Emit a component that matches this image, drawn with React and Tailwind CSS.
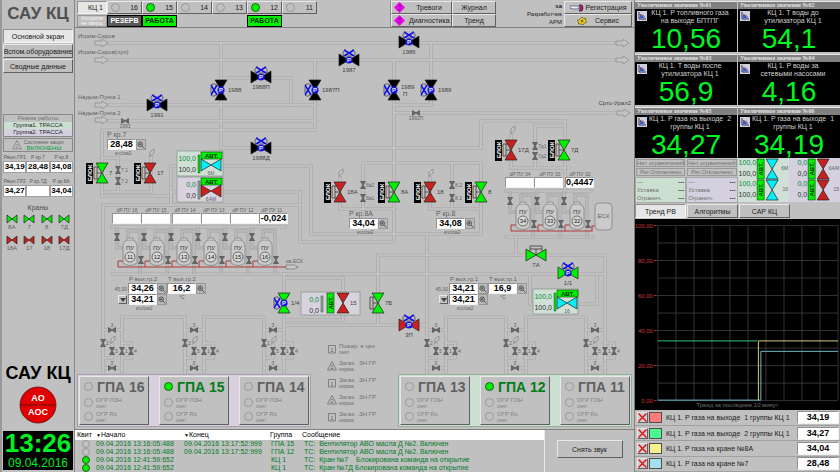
import React, { useState } from 'react';
import clsx from 'clsx';

// The process diagram keeps its own coordinate grid, starting at this origin
const OX = 75;
const OY = 28;

const CAR = '#c92020';
const GREEN = '#00f000';
const CYAN = '#00f0f8';

const UNITS = [
  { id: '16', status: 'РЕЗЕРВ' },
  { id: '15', on: true, status: 'РАБОТА' },
  { id: '14' },
  { id: '13' },
  { id: '12', on: true, status: 'РАБОТА' },
  { id: '11' },
];

const BIG_VALUES = [
  { n: '01', title: ['КЦ 1. P топливного газа', 'на выходе БПТПГ'], value: '10,56' },
  { n: '02', title: ['КЦ 1. T воды до', 'утилизатора КЦ 1'], value: '54,1' },
  { n: '03', title: ['КЦ 1. T воды после', 'утилизатора КЦ 1'], value: '56,9' },
  { n: '04', title: ['КЦ 1. P воды за', 'сетевыми насосами'], value: '4,16' },
  { n: '05', title: ['КЦ 1. P газа на выходе  2', 'группы КЦ 1'], value: '34,27' },
  { n: '06', title: ['КЦ 1. P газа на выходе  1', 'группы КЦ 1'], value: '34,19' },
];

const LEGEND = [
  { color: 'bg-[#ff7c7c]', name: 'КЦ 1. P газа на выходе  1 группы КЦ 1', value: '34,19' },
  { color: 'bg-[#4cf890]', name: 'КЦ 1. P газа на выходе  2 группы КЦ 1', value: '34,27' },
  { color: 'bg-[#f8f08c]', name: 'КЦ 1. P газа на кране №8А', value: '34,04' },
  { color: 'bg-[#a4e0ec]', name: 'КЦ 1. P газа на кране №7', value: '28,48' },
];

const MESSAGES = [
  { start: '09.04.2016 13:16:05:488', end: '09.04.2016 13:17:52:999', group: 'ГПА 15', text: 'ТС:  Вентилятор АВО масла Д №2. Включен' },
  { start: '09.04.2016 13:16:05:488', end: '09.04.2016 13:17:52:999', group: 'ГПА 12', text: 'ТС:  Вентилятор АВО масла Д №2. Включен' },
  { ack: true, start: '09.04.2016 12:41:59:652', end: '', group: 'КЦ 1', text: 'ТС:  Кран №7    Блокирована команда на открытие' },
  { ack: true, start: '09.04.2016 12:41:59:652', end: '', group: 'КЦ 1', text: 'ТС:  Кран №7Д Блокирована команда на открытие' },
];

const RAISED = 'border border-t-[#e8e8e8] border-l-[#e8e8e8] border-b-[#606060] border-r-[#606060]';
const PRESSED = 'border border-t-[#909090] border-l-[#909090] border-b-[#f4f4f4] border-r-[#f4f4f4]';

const Lamp = ({ on, className }) => (
  <span
    className={clsx(
      'inline-block shrink-0 rounded-full border',
      on ? 'bg-[#00f000] border-[#206020]' : 'border-[#989898]',
      className
    )}
  />
);

const MenuButton = ({ active, className, children, ...rest }) => (
  <button
    type="button"
    className={clsx(
      'flex items-center justify-center whitespace-nowrap text-[7px] leading-none text-[#202020]',
      active ? `bg-[#e6e6e6] ${PRESSED}` : `bg-[#c0c0c0] ${RAISED}`,
      className
    )}
    {...rest}
  >
    {children}
  </button>
);

/* ---------- valves ---------- */

const Bowtie = ({ x, y, fill, vertical, w = 10, h = 6, stroke = '#202020' }) => (
  <path
    d={
      vertical
        ? `M${x - h} ${y - w}H${x + h}L${x} ${y}L${x + h} ${y + w}H${x - h}L${x} ${y}Z`
        : `M${x - w} ${y - h}V${y + h}L${x} ${y}L${x + w} ${y + h}V${y - h}L${x} ${y}Z`
    }
    fill={fill}
    stroke={stroke}
    strokeWidth="0.7"
  />
);

const RemoteMark = ({ x, y, vertical }) => {
  const cx = vertical ? x - 7 : x;
  const cy = vertical ? y : y - 7;
  return (
    <g>
      <g transform={`translate(${cx} ${cy}) rotate(${vertical ? 90 : 0})`} fill="none">
        <path d="M-5 3C-7 1 -6 -3 -3 -3M5 3C7 1 6 -3 3 -3M-3 3H3" stroke="#303030" strokeWidth="0.7" />
        <path d="M-5 -3L5 3M5 -3L-5 3" stroke="#1010e8" strokeWidth="1.5" />
      </g>
      <circle cx={x} cy={y} r="3.6" fill="#1414e0" />
      <text x={x} y={y + 2} fontSize="6" fontWeight="700" fill="#e0e8ff" textAnchor="middle">P</text>
    </g>
  );
};

const Bracket = ({ x, y, vertical }) => (
  <path
    d={vertical ? `M${x - 3} ${y - 6}H${x - 8}V${y + 6}H${x - 3}M${x - 5} ${y - 6}V${y + 6}M${x - 5} ${y}H${x}` : `M${x - 6} ${y - 4}V${y - 9}H${x + 6}V${y - 4}M${x - 6} ${y - 6}H${x + 6}M${x} ${y - 6}V${y}`}
    fill="none"
    stroke="#484848"
    strokeWidth="0.9"
  />
);

const Label = ({ x, y, size = 6, anchor = 'start', fill = '#606060', bold, children }) => (
  <text x={x} y={y} fontSize={size} textAnchor={anchor} fill={fill} fontWeight={bold ? 700 : 400}>
    {children}
  </text>
);

const Valve = ({ x, y, fill = '#000', vertical, remote, bracket, blocked, label, label2 }) => (
  <g>
    {(bracket || blocked) && <Bracket x={x} y={y} vertical={vertical} />}
    <Bowtie x={x} y={y} fill={fill} vertical={vertical} />
    {remote && <RemoteMark x={x} y={y} vertical={vertical} />}
    {blocked && (
      <g>
        <rect x={x - 16} y={y - 10} width="7" height="21" fill="#000" />
        <text
          transform={`translate(${x - 10} ${y}) rotate(-90)`}
          fontSize="6"
          fontWeight="700"
          fill="#fff"
          textAnchor="middle"
        >
          БЛОК
        </text>
      </g>
    )}
    {label && (
      <Label
        x={vertical ? x + 7 : x}
        y={vertical ? (label2 ? y - 1 : y + 2) : y + 12}
        anchor={vertical ? 'start' : 'middle'}
        fill="#404040"
      >
        {label}
      </Label>
    )}
    {label2 && <Label x={x + 9} y={y + 6} fill="#404040">{label2}</Label>}
  </g>
);

const MiniValve = ({ x, y, vertical, label }) => (
  <g>
    <Bowtie x={x} y={y} vertical={vertical} w={3.5} h={2.5} fill="#686868" stroke="#505050" />
    {label && (
      <Label x={vertical ? x + 3 : x} y={vertical ? y + 2 : y - 3} size={5} anchor={vertical ? 'start' : 'middle'}>
        {label}
      </Label>
    )}
  </g>
);

const Flag = ({ x, y }) => (
  <path d={`M${x} ${y + 5}V${y}L${x + 4} ${y - 3}V${y + 1}L${x} ${y + 4}`} fill="#c8c8c8" stroke="#808080" strokeWidth="0.7" />
);

const FlowArrow = ({ x, y }) => (
  <path d={`M${x} ${y - 2}H${x + 7}V${y - 4}L${x + 13} ${y}L${x + 7} ${y + 4}V${y + 2}H${x}Z`} fill="#c4c4c4" stroke="#909090" strokeWidth="0.8" />
);

/* ---------- pipes ---------- */

const PIPES = [
  'M108 43H614',
  'M108 60H614',
  'M108 105H315',
  'M108 121H315',
  'M315 60V130H102V196H171',
  'M221 43V148H481V121H565V191',
  'M221 78H291V105',
  'M394 60V242H300V192H171V205',
  'M431 43V105H394',
  'M394 113H615',
  'M102 158H118V192M102 192H151V156',
  'M171 205V166H311V234H481V163H363V209',
  'M300 205H103V375',
  'M340 178V209H394',
  'M430 178V209H481M452 163V209',
  'M511 135V168H565M535 168V126H565',
  'M506 191H591M506 237H592M516 237V255',
  'M112 227H285',
  'M113 274H605',
  'M284 274V375M284 278H343V320H284',
  'M378 325V255H605V375',
  'M284 325H427M427 234V375',
  'M530 274V304H597V274',
  'M122 375V317H185V375M204 375V317H264V375',
  'M446 375V317H506V375M526 375V317H586V375',
];

const TURBINE_X = [103, 185, 264, 427, 506, 586];
TURBINE_X.forEach((x) => {
  PIPES.push(`M${x} 330H${x + 19}M${x} 368H${x + 19}M${x + 19} 343H${x + 28}V358H${x + 19}M${x + 9} 343V358H${x}`);
});

const VESSELS = [
  ...[11, 12, 13, 14, 15, 16].map((n, i) => ({ n, x: 130 + i * 27, y: 257 })),
  ...[34, 33, 32].map((n, i) => ({ n, x: 523 + i * 27, y: 221 })),
];

const Pipes = () => (
  <g fill="none" strokeLinejoin="miter" strokeLinecap="square">
    {PIPES.map((d) => <path key={d} d={d} stroke="#a6a6a6" strokeWidth="3.2" />)}
    {PIPES.map((d) => <path key={d} d={d} stroke="#c8c8c8" strokeWidth="1.6" />)}
  </g>
);

const Vessel = ({ x, y, n }) => (
  <g>
    <path d={`M${x - 13} ${y - 30}V${y - 9}H${x - 7}M${x - 2} ${y - 19}V${y - 26}H${x + 10}V${y + 17}`} fill="none" stroke="#a0a0a0" strokeWidth="3" />
    <path d={`M${x - 13} ${y - 30}V${y - 9}H${x - 7}M${x - 2} ${y - 19}V${y - 26}H${x + 10}V${y + 17}`} fill="none" stroke="#c9c9c9" strokeWidth="1.2" />
    <path d={`M${x - 12} ${y + 10}V${y + 4}H${x - 7}`} fill="none" stroke="#b03838" />
    <path
      d={`M${x - 7} ${y + 6}V${y - 12}Q${x - 6} ${y - 16} ${x - 3} ${y - 17}H${x + 3}Q${x + 6} ${y - 16} ${x + 7} ${y - 12}V${y + 6}Q${x} ${y + 11} ${x - 7} ${y + 6}Z`}
      fill="#cacaca"
      stroke="#808080"
      strokeWidth="0.8"
    />
    <path d={`M${x - 3} ${y - 17}V${y - 19}H${x + 3}V${y - 17}`} fill="#c4c4c4" stroke="#888" strokeWidth="0.7" />
    <Label x={x} y={y - 7} anchor="middle" fill="#404040">ПУ</Label>
    <circle cx={x} cy={y} r="5" fill="#d8d8d8" stroke="#404040" strokeWidth="0.7" />
    <Label x={x} y={y + 2} anchor="middle" fill="#202020">{n}</Label>
    <MiniValve x={x - 13} y={y - 20} vertical />
    <MiniValve x={x + 11} y={y + 3} vertical />
  </g>
);

const TurbineValves = ({ x }) => (
  <g>
    <MiniValve x={x + 9} y={330} label="3" />
    <MiniValve x={x} y={343} vertical label="2" />
    <Flag x={x + 8} y={339} />
    <MiniValve x={x + 9} y={351} vertical label="5" />
    <MiniValve x={x + 19} y={351} vertical label="1" />
    <MiniValve x={x + 28} y={351} vertical label="4" />
    <MiniValve x={x + 9} y={368} label="3'" />
  </g>
);

const Regulator = ({ x, y, width, height, tone, top, bottom, barOn, valueX, barX }) => (
  <g>
    <rect x={x} y={y} width={width} height={height} fill={tone} stroke="#8c9890" strokeWidth="0.8" />
    <Label x={valueX} y={y + 10} size={7} anchor="end" fill="#008c3c">{top}</Label>
    <Label x={valueX} y={y + 21} size={7} anchor="end" fill="#303030">{bottom}</Label>
    <rect x={barX} y={y + 4} width="2" height={height - 7} fill={barOn ? '#00e000' : '#a0a0a0'} stroke="#385038" strokeWidth="0.5" />
  </g>
);

const AutoTag = ({ x, y }) => (
  <g>
    <rect x={x} y={y} width="21" height="7" fill="#00f000" stroke="#104010" strokeWidth="0.6" />
    <Label x={x + 10.5} y={y + 6} anchor="middle" fill="#002800" bold>АВТ.</Label>
  </g>
);

const AutoTagVertical = ({ x, y }) => (
  <g>
    <rect x={x} y={y} width="7" height="20" fill="#00f000" stroke="#104010" strokeWidth="0.6" />
    <text transform={`translate(${x + 6} ${y + 10}) rotate(-90)`} fontSize="6" fontWeight="700" fill="#002800" textAnchor="middle">
      АВТ.
    </text>
  </g>
);

const Drawing = () => (
  <svg viewBox={`${OX} ${OY} 560 347`} width="560" height="347" className="block" fontFamily="Liberation Sans, sans-serif">
    <Pipes />
    <FlowArrow x={95} y={43} />
    <FlowArrow x={95} y={60} />
    <FlowArrow x={95} y={105} />
    <FlowArrow x={95} y={120} />
    <FlowArrow x={616} y={43} />
    <FlowArrow x={616} y={60} />
    <FlowArrow x={617} y={113} />
    <Label x={78} y={38}>Игрим-Серов</Label>
    <Label x={78} y={54}>Игрим-Серов(луп)</Label>
    <Label x={78} y={99}>Надым-Пунга 1</Label>
    <Label x={78} y={115}>Надым-Пунга 2</Label>
    <Label x={631} y={105} anchor="end" fill="#404040">Срто-Урал2</Label>

    <MiniValve x={125} y={121} />
    <Label x={125} y={128} size={5} anchor="middle">1993</Label>
    <MiniValve x={416} y={113} />
    <Label x={416} y={120} size={5} anchor="middle">1992П</Label>

    <Valve x={409} y={42} remote label="1986" />
    <Valve x={349} y={60} remote label="1987" />
    <Valve x={261} y={77} remote label="1988П" />
    <Valve x={157} y={105} remote label="1991" />
    <Valve x={261} y={148} remote label="1988Д" />
    <Valve x={221} y={90} vertical remote label="1988" />
    <Valve x={315} y={90} vertical remote label="1987П" />
    <Valve x={394} y={90} vertical remote label="1989" label2="П" />
    <Valve x={431} y={90} vertical remote label="1989" />

    <Flag x={150} y={152} />
    <Flag x={339} y={172} />
    <Flag x={429} y={172} />
    <Flag x={511} y={129} />
    <Valve x={102} y={173} vertical blocked fill={GREEN} label="7" />
    <Valve x={150} y={173} vertical blocked fill={CAR} label="17" />
    <Valve x={340} y={192} vertical blocked fill={CAR} label="18А" />
    <Valve x={394} y={192} vertical blocked fill={GREEN} label="8А" />
    <Valve x={430} y={192} vertical blocked fill={CAR} label="18" />
    <Valve x={481} y={192} vertical blocked fill={GREEN} label="8" />
    <Valve x={511} y={150} vertical blocked fill={CAR} label="17Д" />
    <Valve x={564} y={150} vertical blocked fill={GREEN} label="7Д" />
    <MiniValve x={118} y={170} vertical label="7.1" />
    <MiniValve x={118} y={181} vertical label="7.2" />
    <MiniValve x={363} y={185} vertical label="8а2" />
    <MiniValve x={363} y={198} vertical label="8а1" />
    <MiniValve x={452} y={185} vertical label="8.2" />
    <MiniValve x={452} y={198} vertical label="8.1" />
    <MiniValve x={535} y={146} vertical label="7д1" />
    <MiniValve x={535} y={156} vertical label="7д2" />

    <Regulator x={177} y={151} width={46} height={25} tone="#d0e0d6" top="100,0" bottom="100,0" barOn valueX={196} barX={198} />
    <AutoTag x={201} y={152} />
    <Bowtie x={211} y={165} fill={CYAN} />
    <Label x={211} y={175} size={5} anchor="middle">6М</Label>
    <Regulator x={177} y={177} width={46} height={25} tone="#d8d2de" top="0,0" bottom="0,0" valueX={196} barX={198} />
    <AutoTag x={201} y={178} />
    <Bowtie x={211} y={191} fill={CAR} />
    <Label x={211} y={201} size={5} anchor="middle">6АМ</Label>

    {['16', '15', '14', '13', '12', '11'].map((n, i) => (
      <Label key={n} x={127 + i * 29} y={212} size={5} anchor="middle">dP ПУ {n}</Label>
    ))}
    {['34', '33', '32'].map((n, i) => (
      <Label key={n} x={520 + i * 30} y={176} size={5} anchor="middle">dP ПУ {n}</Label>
    ))}

    {VESSELS.map((v) => <Vessel key={v.n} {...v} />)}
    <path d="M118 267H286M511 231H592V226H595" fill="none" stroke="#b03838" strokeWidth="1.2" />
    <path d="M286 265H294L298 267L294 269H286Z" fill="#c8c8c8" stroke="#707070" strokeWidth="0.7" />
    <Label x={286} y={263} size={5}>на ЕСК</Label>
    <rect x={595} y={203} width="17" height="27" rx="4" fill="#cacaca" stroke="#909090" />
    <Label x={603.5} y={218} anchor="middle">ЕСК</Label>

    <Valve x={284} y={303} vertical remote fill={GREEN} label="1/4" />
    <Regulator x={301} y={292} width={59} height={23} tone="#d8d2de" top="0,0" bottom="0,0" valueX={319} barX={321} />
    <AutoTagVertical x={327} y={293} />
    <Valve x={343} y={303} vertical fill={CAR} label="15" />
    <Valve x={378} y={303} vertical bracket fill={GREEN} label="7Б" />
    <Valve x={409} y={325} remote fill={CAR} label="3П" />
    <Valve x={536} y={255} bracket fill={GREEN} label="7А" />
    <Valve x={568} y={273} remote fill={GREEN} label="1/1" />
    <Regulator x={533} y={289} width={45} height={25} tone="#d0e0d6" top="100,0" bottom="100,0" barOn valueX={552} barX={554} />
    <AutoTag x={557} y={290} />
    <Bowtie x={567} y={303} fill={CYAN} />
    <Label x={567} y={313} size={5} anchor="middle">16</Label>

    {TURBINE_X.map((x) => <TurbineValves key={x} x={x} />)}
  </svg>
);

/* ---------- html pieces that sit on the diagram ---------- */

const Place = ({ x, y, className, children }) => (
  <div className={clsx('absolute whitespace-nowrap', className)} style={{ left: x - OX, top: y - OY }}>
    {children}
  </div>
);

const ValueBox = ({ children }) => (
  <output className={`block h-[11px] w-[29px] bg-white text-center text-[9px] font-bold leading-[9px] text-black ${PRESSED}`}>
    {children}
  </output>
);

const ZoomButton = ({ label }) => (
  <button type="button" aria-label={label} className="flex h-[11px] w-[10px] items-center justify-center border border-[#989898] bg-[#b8b8b8]">
    <svg viewBox="0 0 8 8" className="h-2 w-2" fill="none" stroke="#404040" strokeWidth="0.8">
      <circle cx="3.2" cy="3.2" r="2.3" />
      <path d="M5 5L7.5 7.5M2 3.2H4.4M3.2 2V4.4" />
    </svg>
  </button>
);

const Readout = ({ value, label }) => (
  <div className="flex">
    <ValueBox>{value}</ValueBox>
    <ZoomButton label={label} />
  </div>
);

const SmallReadout = ({ x, y, title, value }) => (
  <Place x={x} y={y} className="text-[7px] leading-[8px] text-[#606060]">
    <div>{title}</div>
    <Readout value={value} label={title} />
    <div className="ml-2 text-[5px] leading-[6px]">кгс/см2</div>
  </Place>
);

const OutletBlock = ({ x, group, p, setpoint, t }) => (
  <Place x={x} y={275} className="flex items-start text-[6px] leading-[8px] text-[#606060]">
    <div className="flex w-[15px] flex-col items-end pt-[10px] pr-px text-[5px]">
      <span>45,00</span>
      <button type="button" aria-label={`Уставка гр.${group}`} className={`mt-[2px] flex h-[9px] w-[9px] items-center justify-center bg-[#c0c0c0] ${RAISED}`}>
        <svg viewBox="0 0 6 4" className="h-1 w-1.5"><path d="M0 0H6L3 4Z" fill="#404040" /></svg>
      </button>
    </div>
    <div>
      <div className="pl-px">P вых.гр.{group}</div>
      <Readout value={p} label="P вых." />
      <Readout value={setpoint} label="Уставка" />
      <div className="ml-2 text-[5px] leading-[6px]">кгс/см2</div>
    </div>
    <div>
      <div className="pl-px">T вых.гр.{group}</div>
      <Readout value={t} label="T вых." />
      <div className="ml-3 text-[5px] leading-[6px]">°C</div>
    </div>
  </Place>
);

const ALARMS = [
  { kind: '1', name: 'Пожар  в цех', state: 'снят' },
  { kind: '2', name: 'Загаз.  ЗН ГР', state: 'норма' },
  { kind: '1', name: 'Загаз.  ЗН ГР', state: 'норма' },
  { kind: '2', name: 'Загаз.  ЗН ГР', state: 'норма' },
  { kind: '1', name: 'Загаз.  ЗН ГР', state: 'норма' },
];

const Turbine = ({ id }) => {
  const on = UNITS.find((u) => u.id === id).on;
  return (
    <button type="button" className={`h-[49px] min-w-0 flex-1 bg-[#c0c0c0] pl-[4px] text-left text-[6px] text-[#808080] ${RAISED}`}>
      <span className="flex h-[18px] items-center gap-[4px]">
        <Lamp on={on} className="h-[9px] w-[9px]" />
        <span className={clsx('whitespace-nowrap text-[14px] font-bold leading-none', on ? 'text-[#007c18]' : 'text-[#606060]')}>
          ГПА {id}
        </span>
      </span>
      {['ОГР ПЗН', 'ОГР Rc'].map((name) => (
        <span key={name} className="flex h-[14px] items-center gap-[3px]">
          <Lamp className="h-[9px] w-[9px]" />
          <span className="leading-[6px]">
            <span className="block">{name}</span>
            <span className="block text-[5px]">снят</span>
          </span>
        </span>
      ))}
    </button>
  );
};

const Mimic = () => (
  <section className="relative">
    <Drawing />
    <SmallReadout x={107} y={131} title="P кр.7" value="28,48" />
    <SmallReadout x={349} y={210} title="P кр.8А" value="34,04" />
    <SmallReadout x={436} y={210} title="P кр.8" value="34,08" />
    <OutletBlock x={113} group="2" p="34,26" setpoint="34,21" t="16,2" />
    <OutletBlock x={434} group="1" p="34,21" setpoint="34,21" t="16,9" />
    <Place x={112} y={213} className="flex gap-[2px]">
      <div className="flex"><ValueBox /><ValueBox /></div>
      <div className="flex"><ValueBox /><ValueBox /><ValueBox /><ValueBox>-0,024</ValueBox></div>
    </Place>
    <Place x={505} y={177} className="flex gap-[2px]">
      <div className="flex"><ValueBox /><ValueBox /></div>
      <ValueBox>0,4447</ValueBox>
    </Place>
    <Place x={327} y={340} className="flex flex-col">
      {ALARMS.map((a, i) => (
        <div key={i} className="flex h-[17px] items-center gap-[2px] text-[#707070]">
          <svg viewBox="0 0 10 10" className="h-[10px] w-[10px]" fill="none" stroke="#707070" strokeWidth="0.8">
            {a.kind === '1' ? <path d="M1.5 1.5H8.5V9H1.5Z" /> : <path d="M5 0.5L9.5 9H0.5Z" />}
            <text x="5" y="8" fontSize="6" textAnchor="middle" fill="#606060" stroke="none">{a.kind}</text>
          </svg>
          <div className="leading-[6px]">
            <div className="whitespace-pre text-[6px]">{a.name}</div>
            <div className="text-[5px]">{a.state}</div>
          </div>
        </div>
      ))}
    </Place>
    <div className="-mt-px flex justify-between pr-[2px] pl-[2px]">
      <div className="flex w-[234px] gap-[10px] border border-[#a8a0ac] bg-[#d8d0dc] p-[1px]">
        {['16', '15', '14'].map((id) => <Turbine key={id} id={id} />)}
      </div>
      <div className="flex w-[234px] gap-[10px] border border-[#98aca0] bg-[#cce0d2] p-[1px]">
        {['13', '12', '11'].map((id) => <Turbine key={id} id={id} />)}
      </div>
    </div>
  </section>
);

/* ---------- left column ---------- */

const SideValves = ({ fill, names }) => (
  <div className="grid grid-cols-4 text-center text-[6px] leading-[7px] text-[#606060]">
    {names.map((n) => (
      <div key={n}>
        <svg viewBox="0 0 14 10" className="mx-auto block h-[10px] w-[14px]">
          <Bowtie x={7} y={5} w={5} h={4} fill={fill} />
        </svg>
        {n}
      </div>
    ))}
  </div>
);

const SideReadings = ({ items }) => (
  <div className="grid grid-cols-3 text-center">
    {items.map(([name, value]) => (
      <div key={name} className="min-w-0">
        <div className="whitespace-nowrap text-[5px] leading-[7px] text-[#585858]">{name}</div>
        <output className="block h-[12px] border border-[#a0a0a0] bg-white text-[8px] font-bold leading-[10px] text-black">{value}</output>
      </div>
    ))}
  </div>
);

const LeftPanel = () => {
  const [screen, setScreen] = useState('Основной экран');
  return (
    <aside className="flex w-[75px] shrink-0 flex-col border-r border-l-2 border-[#888888] border-l-[#989898] px-px">
      <h1 className="pt-[4px] text-center text-[17px] font-bold leading-[20px] text-[#505050]">САУ КЦ</h1>
      <nav className="mt-[5px] flex flex-col gap-px">
        {['Основной экран', 'Вспом.оборудование', 'Сводные данные'].map((s) => (
          <MenuButton key={s} active={screen === s} onClick={() => setScreen(s)} className="h-[14px] w-full">
            {s}
          </MenuButton>
        ))}
      </nav>
      <div className="mt-[41px] border border-[#888888] text-center text-[6px] leading-[7px] text-[#202020]">
        <div className="text-[#707070]">Режим работы</div>
        <div className="bg-[#cce0d2]">Группа1. ТРАССА</div>
        <div className="bg-[#d4d0e0]">Группа2. ТРАССА</div>
      </div>
      <div className="mt-px flex items-center justify-center gap-[2px] border border-[#888888] text-[6px] leading-[6px]">
        <svg viewBox="0 0 10 10" className="h-[10px] w-[10px]" fill="none" stroke="#888" strokeWidth="0.9">
          <path d="M5 0.5L9.5 9H0.5Z" />
          <text x="5" y="8" fontSize="6" textAnchor="middle" fill="#808080" stroke="none">2</text>
        </svg>
        <div className="text-center">
          <div className="whitespace-nowrap text-[5px] text-[#606060]">Состояние защит</div>
          <div className="text-[#00a040]">ВКЛЮЧЕНЫ</div>
        </div>
      </div>
      <div className="mt-[2px] flex flex-col gap-[5px]">
        <SideReadings items={[['Pвых.ГР1', '34,19'], ['P кр.7', '28,48'], ['P кр.8', '34,08']]} />
        <SideReadings items={[['Pвых.ГР2', '34,27'], ['P кр.7Д', ''], ['P кр.8А', '34,04']]} />
      </div>
      <div className="mt-[5px] text-center text-[7px] leading-[12px] text-[#505050]">Краны</div>
      <div className="flex flex-col gap-[4px]">
        <SideValves fill={GREEN} names={['8А', '7', '8', '7Д']} />
        <SideValves fill={CAR} names={['18А', '17', '18', '17Д']} />
      </div>
      <div className="mt-auto text-center text-[18px] font-bold leading-[20px] text-black">САУ КЦ</div>
      <svg viewBox="0 0 38 38" className="mx-auto mt-[3px] mb-[7px] block h-[38px] w-[38px]" fontFamily="Liberation Sans, sans-serif">
        <circle cx="19" cy="19" r="18" fill="#e00000" stroke="#601010" strokeWidth="0.8" />
        <path d="M1 19H37" stroke="#501010" strokeWidth="0.8" />
        <text x="19" y="15" fontSize="9" fontWeight="700" fill="#fff" textAnchor="middle">АО</text>
        <text x="19" y="29" fontSize="9" fontWeight="700" fill="#fff" textAnchor="middle">АОС</text>
      </svg>
      <div className="mb-[2px] bg-black text-center text-[#00f020]">
        <div className="text-[26px] font-bold leading-[25px]">13:26</div>
        <div className="text-[12px] leading-[14px]">09.04.2016</div>
      </div>
    </aside>
  );
};

/* ---------- top bar ---------- */

const AlarmIcon = () => (
  <svg viewBox="0 0 12 12" className="mr-1 h-[11px] w-[11px] shrink-0">
    <path d="M6 0L12 6L6 12L0 6Z" fill="#f000f0" />
    <path d="M4.500 3.500H7.500L6 5.500C8.500 6 7.500 9 4.500 8.500" fill="none" stroke="#600060" strokeWidth="0.8" />
  </svg>
);

const TopBar = () => (
  <header className="flex h-[28px] border-b border-[#808080] pt-[1px] pl-[2px]">
    <div className="w-[30px]">
      <MenuButton active className="h-[13px] w-full justify-end! pr-[3px]">КЦ 1</MenuButton>
      <div className="mt-px h-[12px] border border-[#989898] text-center text-[5px] leading-[5px] text-[#f8f8f8]">
        Алгоритм<br />не запущ
      </div>
    </div>
    {UNITS.map((u) => (
      <div key={u.id} className="w-[35px]">
        <MenuButton className="h-[13px] w-full justify-between! px-[3px]">
          <Lamp on={u.on} className="h-[9px] w-[9px]" />
          {u.id}
        </MenuButton>
        {u.status && (
          <div
            className={clsx(
              'mt-px h-[12px] border border-black text-center text-[7px] font-bold leading-[10px]',
              u.on ? 'bg-[#00f000] text-[#003000]' : 'bg-[#585858] text-white'
            )}
          >
            {u.status}
          </div>
        )}
      </div>
    ))}
    <div className="ml-auto grid grid-cols-[61px_44px] grid-rows-[13px_13px] border-l border-[#909090]">
      <MenuButton><AlarmIcon /><span className="w-[40px]">Тревоги</span></MenuButton>
      <MenuButton>Журнал</MenuButton>
      <MenuButton><AlarmIcon /><span className="w-[40px]">Диагностика</span></MenuButton>
      <MenuButton>Тренд</MenuButton>
    </div>
    <div className="w-[68px] pr-[2px] pt-px text-right text-[6px] leading-[8px] text-[#202020]">
      <div className="font-bold">sa</div>
      <div>Разработчик</div>
      <div>АРМ</div>
    </div>
    <div className="mr-[2px] grid w-[68px] grid-rows-[13px_13px]">
      <MenuButton className="gap-[2px]">
        <svg viewBox="0 0 14 8" className="h-2 w-3.5 shrink-0">
          <path d="M0 2H7L10 4L7 5H3L0 4Z" fill="#f0f0f0" stroke="#404080" strokeWidth="0.7" />
          <path d="M9 1H12Q14 4 12 7H9Q12 4 9 1Z" fill="#c02020" stroke="#202090" strokeWidth="0.8" />
        </svg>
        Регистрация
      </MenuButton>
      <MenuButton className="gap-2">
        <svg viewBox="0 0 10 8" className="h-2 w-2.5 shrink-0">
          <path d="M5 0L6.500 1.500L9 1.500L8.500 3.500L10 5L7.500 6L6 8L4 7L1.500 7L1.500 5L0 3.500L2.500 2.500Z" fill="#e8c820" stroke="#605010" strokeWidth="0.7" />
          <circle cx="5" cy="4" r="1.300" fill="#806a10" />
        </svg>
        Сервис
      </MenuButton>
    </div>
  </header>
);

/* ---------- message log ---------- */

const Messages = () => (
  <footer className="mt-[2px] flex min-h-0 flex-1 overflow-hidden border-t border-[#808080]">
    <table className="h-fit w-[469px] table-fixed border-collapse text-left text-[7px] leading-[8px] text-[#007c28]">
      <colgroup>
        <col className="w-[21px]" />
        <col className="w-[88px]" />
        <col className="w-[86px]" />
        <col className="w-[30px]" />
        <col />
      </colgroup>
      <thead>
        <tr className="h-[10px] bg-white text-black">
          <th className="pl-[2px] font-normal">Квит</th>
          <th className="font-normal"><span className="text-[5px]">▼</span>Начало</th>
          <th className="font-normal"><span className="text-[5px]">▼</span>Конец</th>
          <th className="font-normal">Группа</th>
          <th className="pl-[2px] font-normal">Сообщение</th>
        </tr>
      </thead>
      <tbody>
        {MESSAGES.map((m, i) => (
          <tr key={i} className="h-[8px] whitespace-pre">
            <td className="pl-[7px]"><Lamp on={m.ack} className="block! h-[8px] w-[8px]" /></td>
            <td>{m.start}</td>
            <td>{m.end}</td>
            <td className="pl-px">{m.group}</td>
            <td className="pl-[4px]">{m.text}</td>
          </tr>
        ))}
      </tbody>
    </table>
    <div className="flex flex-1 items-center justify-center border-l border-[#e8e8e8]">
      <MenuButton className="-mt-1 h-[18px] w-[66px]">Снять звук</MenuButton>
    </div>
  </footer>
);

/* ---------- right column ---------- */

const BigValue = ({ n, title, value }) => (
  <div className="border-t border-[#e8e8e8] bg-black">
    <div className="h-[7px] overflow-hidden bg-[#808080] pl-[2px] font-['Liberation_Serif',serif] text-[6px] font-bold leading-[7px] text-[#e0e0e0]">
      Увеличенное значение №{n}
    </div>
    <div className="flex h-[43px]">
      <svg viewBox="0 0 10 10" className="mt-[2px] ml-[2px] h-[10px] w-[10px] shrink-0">
        <path d="M0 0H10V10H0Z" fill="#d0d0d8" />
        <path d="M2 1V8H9" stroke="#303060" fill="none" />
        <path d="M3 7V3L5 4L8 7Z" fill="#3060d0" />
        <path d="M3 4L6 4L8 6" stroke="#c03030" strokeWidth="0.6" fill="none" />
      </svg>
      <div className="min-w-0 flex-1 pr-1 text-center">
        <div className="whitespace-pre text-[7px] leading-[8px] text-[#d0d0d0]">
          {title[0]}<br />{title[1]}
        </div>
        <output className="-ml-2 block text-[28px] leading-[28px] text-[#00f820]">{value}</output>
      </div>
    </div>
  </div>
);

const Limits = ({ tone }) => (
  <div className="min-w-0 text-[6px] text-[#707070]">
    <div className="mx-px mt-px h-[8px] whitespace-nowrap border border-[#989898] text-center leading-[6px]">Нет ограничений</div>
    <div className="mx-px mt-px h-[8px] whitespace-nowrap border border-[#989898] text-center leading-[6px]">Рег.Отключено</div>
    <div className={clsx('mt-px border border-[#a8a8a8] px-px leading-[8px]', tone)}>
      {['—', 'Уставка', 'Огранич.'].map((name) => (
        <div key={name} className="flex justify-between">
          <span>{name}</span>
          <span className="font-bold text-[#202020]">---</span>
        </div>
      ))}
    </div>
  </div>
);

const ValvePair = ({ tone, value, fill, names }) => (
  <svg viewBox="0 0 51 44" className="h-[44px] w-full" fontFamily="Liberation Sans, sans-serif">
    <rect width="51" height="44" fill={tone} />
    {[0, 21].map((dy, i) => (
      <g key={dy}>
        <Label x={18} y={7 + dy} size={7} anchor="end" fill="#008c3c">{value}</Label>
        <Label x={18} y={18 + dy} size={7} anchor="end" fill="#303030">{value}</Label>
        <AutoTagVertical x={19} y={1 + dy} />
        <Bowtie x={34} y={11 + dy} vertical fill={fill} />
        <Label x={50} y={12 + dy} size={5} anchor="end">{names[i]}</Label>
      </g>
    ))}
  </svg>
);

const Trend = () => (
  <svg viewBox="634 219 206 192" className="block w-full bg-black" fontFamily="Liberation Sans, sans-serif">
    {Array.from({ length: 11 }, (_, i) => (
      <g key={i} stroke="#404040" strokeWidth="0.8">
        <path d={`M${657 + i * 18.1} 225V401`} />
        <path d={`M657 ${225.5 + i * 17.600}H838`} />
      </g>
    ))}
    {[100, 80, 60, 40, 20, 0].map((v, i) => (
      <g key={v}>
        <Label x={652} y={228 + i * 35.2} size={6} anchor="end" fill="#c83c3c">{v},00</Label>
        <path d={`M653 ${225.5 + i * 35.2}H656`} stroke="#c83c3c" strokeWidth="0.8" />
      </g>
    ))}
    <path d="M657 341.500H757" stroke="#30c878" />
    <path d="M657 401H760.500V352H838" fill="none" stroke="#70b8c8" />
    <path d="M758 401V341.500H838" fill="none" stroke="#d8cc70" />
    <Label x={737} y={408} size={6} anchor="middle" fill="#707070">Тренд за последние 10 минут</Label>
  </svg>
);

const RightPanel = () => {
  const [tab, setTab] = useState('Тренд РВ');
  return (
    <aside className="flex w-[206px] shrink-0 flex-col border-l border-[#808080]">
      <div className="grid grid-cols-2 gap-x-px gap-y-[2px] pt-px">
        {BIG_VALUES.map((v) => <BigValue key={v.n} {...v} />)}
      </div>
      <div className="grid grid-cols-4">
        <Limits tone="bg-[#cce0d2]" />
        <Limits tone="bg-[#d4d0e0]" />
        <ValvePair tone="#d0e0d6" value="100,0" fill={CYAN} names={['6М', '16']} />
        <ValvePair tone="#d4d0e0" value="0,0" fill={CAR} names={['6АМ', '15']} />
      </div>
      <div className="flex gap-px py-px">
        {['Тренд РВ', 'Алгоритмы', 'САР КЦ'].map((t) => (
          <MenuButton key={t} active={tab === t} onClick={() => setTab(t)} className="h-[14px] w-[51px]">{t}</MenuButton>
        ))}
      </div>
      <Trend />
      <table className="w-full flex-1 border-collapse text-[7px] leading-[9px] text-[#202020]">
        <tbody>
          {LEGEND.map((row) => (
            <tr key={row.name} className="h-[15px] border-b border-[#a0a0a0]">
              <td className="w-[14px] pl-[2px]">
                <button type="button" aria-label={`Убрать ${row.name}`} className={`flex h-[11px] w-[11px] items-center justify-center bg-[#d0d0d0] ${RAISED}`}>
                  <svg viewBox="0 0 8 8" className="h-[9px] w-[9px]"><path d="M0.500 0.500L7.500 7.500M7.500 0.500L0.500 7.500" stroke="#e01818" strokeWidth="1.400" /></svg>
                </button>
              </td>
              <td className="w-[17px]"><span className={clsx('block h-[11px] w-[13px] border border-[#505050]', row.color)} /></td>
              <td className="whitespace-pre">{row.name}</td>
              <td className="w-[43px] pr-px">
                <output className={`block h-[13px] bg-white text-center text-[9px] font-bold leading-[11px] text-black ${PRESSED}`}>{row.value}</output>
              </td>
            </tr>
          ))}
        </tbody>
      </table>
    </aside>
  );
};

export default function App() {
  return (
    <div className="flex h-screen overflow-hidden bg-[#c0c0c0] font-['Liberation_Sans',sans-serif] text-black">
      <LeftPanel />
      <main className="flex min-w-0 flex-1 flex-col">
        <TopBar />
        <Mimic />
        <Messages />
      </main>
      <RightPanel />
    </div>
  );
}
